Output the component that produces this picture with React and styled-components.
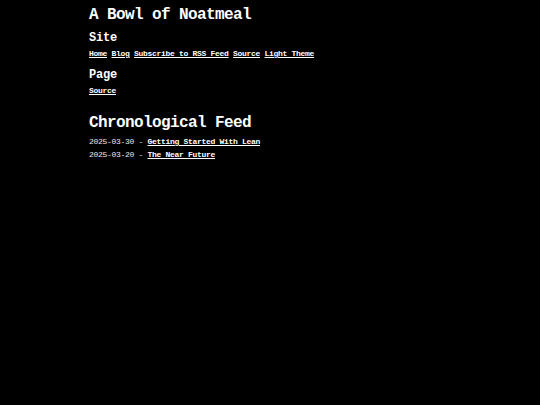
import React from 'react'
import styled, { createGlobalStyle } from 'styled-components'

const GlobalStyle = createGlobalStyle`
    html, body {
        margin: 0;
        padding: 0;
        background: #000;
    }
    body {
        color: #fff;
        font-family: "Liberation Mono", "DejaVu Sans Mono", monospace;
    }
`

const Page = styled.div`
    max-width: 362px;
    margin: 0 auto;
    padding-top: 6px;
`

const Title = styled.h1`
    font-size: 16px;
    letter-spacing: -0.6px;
    font-weight: bold;
    margin: 0 0 6px;
    line-height: 18px;
`

const SectionTitle = styled.h2`
    font-size: 12px;
    letter-spacing: -0.2px;
    font-weight: bold;
    margin: 0 0 2px;
    line-height: 16px;
`

const Nav = styled.nav`
    display: flex;
    gap: 4.5px;
    font-size: 8px;
    letter-spacing: -0.3px;
    line-height: 12px;
    margin-bottom: ${(p) => p.$gap || 7}px;
`

const Link = styled.a`
    color: #fff;
    font-weight: bold;
    text-decoration: underline;
`

const FeedTitle = styled.h1`
    font-size: 16px;
    letter-spacing: -0.6px;
    font-weight: bold;
    margin: 0 0 3px;
    line-height: 18px;
`

const FeedList = styled.ul`
    list-style: none;
    margin: 0;
    padding: 0;
`

const FeedItem = styled.li`
    font-size: 8px;
    letter-spacing: -0.3px;
    line-height: 13px;
    color: #e6e6e6;
`

const posts = [
    { date: '2025-03-30', title: 'Getting Started With Lean' },
    { date: '2025-03-20', title: 'The Near Future' },
]

export default function App() {
    return (
        <>
            <GlobalStyle />
            <Page>
                <Title>A Bowl of Noatmeal</Title>
                <SectionTitle>Site</SectionTitle>
                <Nav>
                    <Link href="#">Home</Link>
                    <Link href="#">Blog</Link>
                    <Link href="#">Subscribe to RSS Feed</Link>
                    <Link href="#">Source</Link>
                    <Link href="#">Light Theme</Link>
                </Nav>
                <SectionTitle>Page</SectionTitle>
                <Nav $gap={17}>
                    <Link href="#">Source</Link>
                </Nav>
                <FeedTitle>Chronological Feed</FeedTitle>
                <FeedList>
                    {posts.map((p) => (
                        <FeedItem key={p.date}>
                            {p.date} - <Link href="#">{p.title}</Link>
                        </FeedItem>
                    ))}
                </FeedList>
            </Page>
        </>
    )
}
